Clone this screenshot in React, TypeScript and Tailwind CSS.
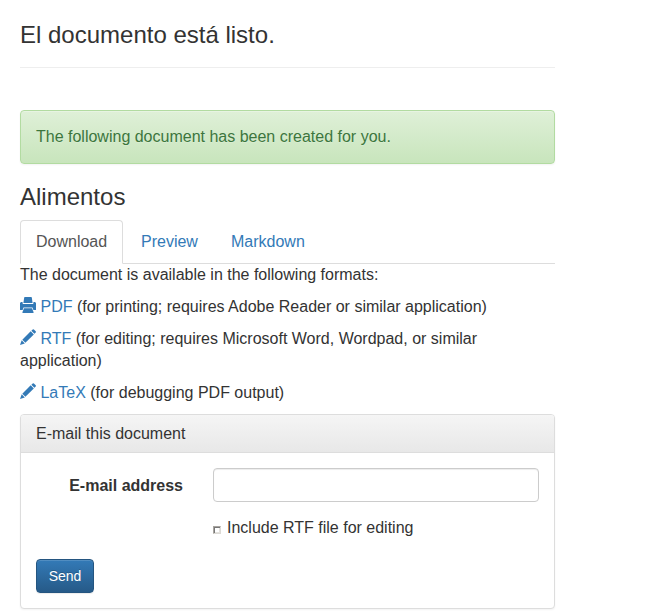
import React from "react";

function PrintIcon() {
  return (
    <svg className="inline-block h-4 w-4 align-[-1px]" viewBox="0 0 16 16" fill="currentColor" aria-hidden="true">
      <path d="M4.7 0h6.6q.4 0 .5.4l.8 5.6H3.4l.8-5.6q.1-.4.5-.4z" />
      <path d="M1 5h1.5l.3 2h10.4l.3-2H15l1 1.1V13h-2.6l-.9-2.4h-9L2.6 13H0V6.1z" />
      <path d="M4 11.3h8l1.6 3.9q.2.7-.5.7H2.9q-.7 0-.5-.7z" />
    </svg>
  );
}

function PencilIcon() {
  return (
    <svg className="inline-block h-4 w-4 align-[-1px]" viewBox="0 0 16 16" fill="currentColor" aria-hidden="true">
      <path d="M12.7.5q.6-.5 1.2 0l1.8 1.8q.5.6 0 1.1l-1.3 1.3-3-3z" />
      <path d="M10.7 2.3l3.1 3.1-8.4 8.4-3.1-3.1z" />
      <path d="M1.7 11.3l3.1 3.1L0 15.9z" />
    </svg>
  );
}

function Format({ icon, name, children }: { icon: React.ReactNode; name: string; children: React.ReactNode }) {
  return (
    <p className="mb-[10px]">
      <a href="#" className="text-[#337ab7]">
        {icon} {name}
      </a>{" "}
      {children}
    </p>
  );
}

export default function App() {
  return (
    <div className="h-[612px] overflow-hidden bg-white font-['Liberation_Sans',Arial,sans-serif] text-base leading-[22px] text-[#333]">
      <main className="ml-5 w-[535px] pt-[21px]">
        <h3 className="h-[47px] border-b border-[#eee] text-2xl leading-[27px]">El documento está listo.</h3>

        <div className="mt-[42px] h-[54px] rounded border border-[#b2dba1] bg-linear-to-b from-[#dff0d8] to-[#c8e5bc] p-[15px] text-[#3c763d] shadow-[inset_0_1px_0_rgba(255,255,255,.25),0_1px_2px_rgba(0,0,0,.05)] [text-shadow:0_1px_0_rgba(255,255,255,.2)]">
          The following document has been created for you.
        </div>

        <h3 className="mt-[20px] mb-[10px] text-2xl leading-[26px]">Alimentos</h3>

        <nav className="flex h-11 gap-[2px] border-b border-[#ddd]">
          <a href="#" className="h-11 w-[103px] rounded-t border border-[#ddd] border-b-transparent bg-white px-[15px] py-[10px] text-[#555]">
            Download
          </a>
          <a href="#" className="w-[88px] px-4 py-[11px] text-[#337ab7]">Preview</a>
          <a href="#" className="px-4 py-[11px] text-[#337ab7]">Markdown</a>
        </nav>

        <p className="mb-[10px]">The document is available in the following formats:</p>
        <Format icon={<PrintIcon />} name="PDF">(for printing; requires Adobe Reader or similar application)</Format>
        <Format icon={<PencilIcon />} name="RTF">(for editing; requires Microsoft Word, Wordpad, or similar application)</Format>
        <Format icon={<PencilIcon />} name="LaTeX">(for debugging PDF output)</Format>

        <section className="h-[195px] rounded border border-[#ddd] bg-white shadow-[0_1px_2px_rgba(0,0,0,.05)]">
          <h4 className="h-[38px] rounded-t-[3px] border-b border-[#ddd] bg-linear-to-b from-[#f5f5f5] to-[#e8e8e8] px-[15px] pt-2">
            E-mail this document
          </h4>
          <form className="px-[15px] pt-[15px]">
            <div className="flex">
              <label htmlFor="email" className="w-[147px] pt-[7px] text-right font-bold">E-mail address</label>
              <input
                id="email"
                type="text"
                className="ml-[30px] h-[34px] flex-1 rounded border border-[#ccc] bg-white px-3 shadow-[inset_0_1px_1px_rgba(0,0,0,.075)] outline-none"
              />
            </div>
            <label className="mt-[15px] ml-[177px] flex">
              <input
                type="checkbox"
                className="mt-[9px] mr-[6px] h-2 w-2 appearance-none border border-t-[#a8a5a0] border-r-[#dcdad5] border-b-[#dcdad5] border-l-[#a8a5a0] bg-white shadow-[inset_1px_1px_0_#777,inset_-1px_-1px_0_#e4e2de]"
              />
              Include RTF file for editing
            </label>
            <button
              type="button"
              className="mt-5 block h-[34px] w-[58px] rounded border border-[#245580] bg-linear-to-b from-[#337ab7] to-[#265a88] text-sm leading-5 text-white shadow-[inset_0_1px_0_rgba(255,255,255,.15),0_1px_1px_rgba(0,0,0,.075)] [text-shadow:0_-1px_0_rgba(0,0,0,.2)]"
            >
              Send
            </button>
          </form>
        </section>
      </main>
    </div>
  );
}
